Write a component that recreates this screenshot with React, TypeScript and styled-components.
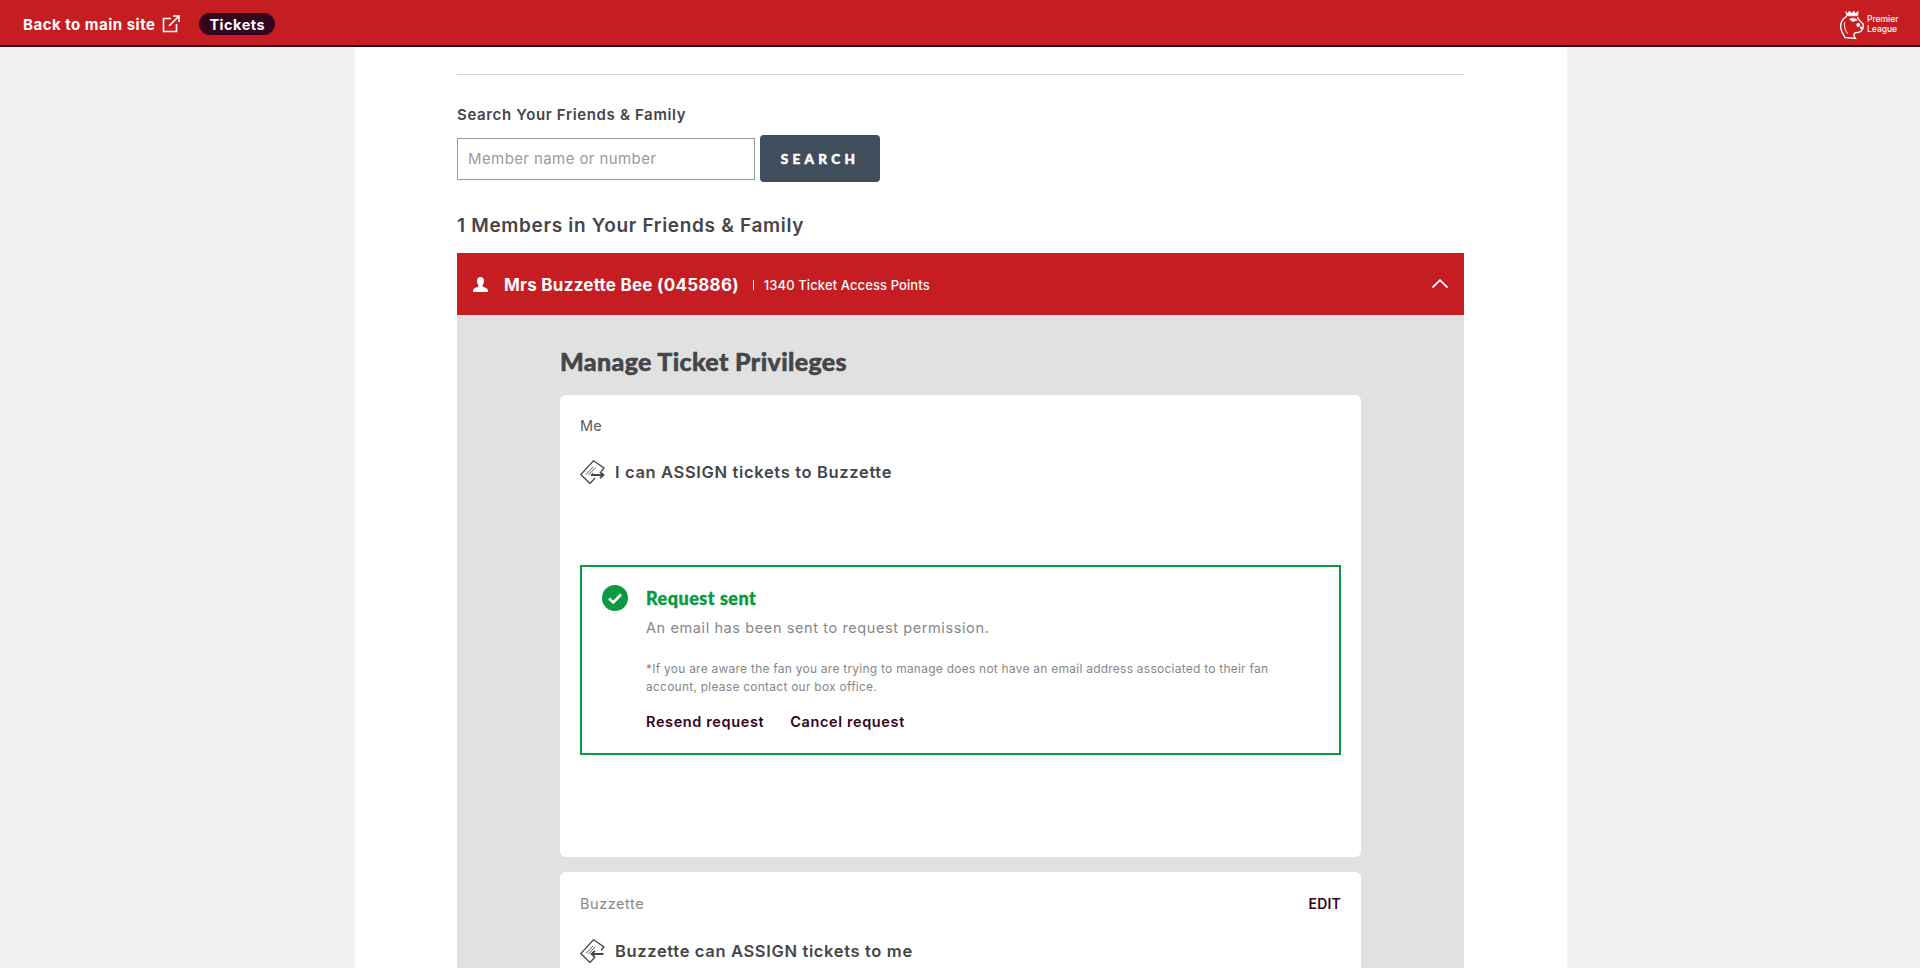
import React from 'react';
import styled, { createGlobalStyle } from 'styled-components';

const BODY = `Inter, "Liberation Sans", sans-serif`;
const HEAVY = `Lato, "Liberation Sans", sans-serif`;
const RED = '#c51d22';
const WINE = '#34031d';
const SLATE = '#45464a';

const Global = createGlobalStyle`
  html, body {
    margin: 0;
    height: 100%;
    overflow: hidden;
    background: #f1f1f1;
    font-family: ${BODY};
  }
  #root { height: 100%; }
  * { box-sizing: border-box; }
`;

const TopBar = styled.header`
  height: 47px;
  background: ${RED};
  border-bottom: 2px solid ${WINE};
  display: flex;
  align-items: center;
  padding: 3px 22px 0 23px;
`;

const BackLink = styled.a`
  display: flex;
  align-items: center;
  gap: 7px;
  color: #fff;
  font-size: 15px;
  font-weight: 700;
  letter-spacing: 0.5px;
`;

const Pill = styled.span`
  margin-left: 19px;
  height: 22px;
  padding: 0 10px;
  border-radius: 11px;
  background: ${WINE};
  color: #fff;
  font-size: 14.5px;
  font-weight: 700;
  letter-spacing: 0.5px;
  display: flex;
  align-items: center;
`;

const Brand = styled.div`
  margin-left: auto;
  display: flex;
  align-items: center;
  color: #fff;
`;

const BrandName = styled.span`
  font-size: 8.5px;
  line-height: 10px;
  font-weight: 500;
  width: 31px;
  margin-left: 2px;
`;

const Sheet = styled.main`
  width: 1212px;
  height: calc(100% - 47px);
  margin-left: 355px;
  background: #fff;
  padding: 27px 103px 0 102px;
  overflow: hidden;
`;

const Rule = styled.hr`
  margin: 0;
  border: 0;
  border-top: 1px solid #d4d4d4;
`;

const SearchLabel = styled.label`
  display: block;
  margin-top: 30px;
  color: ${SLATE};
  font-size: 15px;
  line-height: 20px;
  font-weight: 600;
  letter-spacing: 0.65px;
`;

const SearchRow = styled.div`
  display: flex;
  align-items: center;
  gap: 5px;
  margin-top: 10px;
`;

const SearchInput = styled.input`
  width: 298px;
  height: 42px;
  border: 1px solid #9a9a9a;
  padding: 0 10px;
  font-family: ${BODY};
  font-size: 15px;
  letter-spacing: 0.4px;
  &::placeholder { color: #9a9a9a; opacity: 1; }
`;

const SearchButton = styled.button`
  width: 120px;
  height: 47px;
  border: 0;
  border-radius: 4px;
  background: #3f4d5c;
  color: #fff;
  font-family: ${HEAVY};
  font-size: 13.5px;
  font-weight: 900;
  letter-spacing: 4.3px;
  -webkit-text-stroke: 0.5px #fff;
`;

const MembersTitle = styled.h2`
  margin: 31px 0 0;
  color: ${SLATE};
  font-size: 19px;
  line-height: 26px;
  font-weight: 600;
  letter-spacing: 0.68px;
`;

const MemberBar = styled.div`
  height: 62px;
  margin-top: 14px;
  background: ${RED};
  color: #fff;
  display: flex;
  align-items: center;
  padding: 0 16px;
`;

const MemberName = styled.span`
  margin: 2px 0 0 16px;
  font-size: 17px;
  font-weight: 700;
  letter-spacing: 0.25px;
`;

const Points = styled.span`
  margin: 2px 0 0 14px;
  padding-left: 11px;
  font-size: 13px;
  font-weight: 500;
  letter-spacing: 0.1px;
  background: linear-gradient(#fff, #fff) left center / 1px 10px no-repeat;
`;

const Chevron = styled.span`
  margin: 0 0 2px auto;
  display: flex;
`;

const Panel = styled.section`
  background: #e1e1e1;
  padding: 30px 103px 0;
`;

const PanelTitle = styled.h3`
  margin: 0 0 18px;
  color: ${SLATE};
  font-family: ${HEAVY};
  font-size: 25px;
  line-height: 32px;
  font-weight: 900;
  letter-spacing: 0.35px;
  -webkit-text-stroke: 0.5px ${SLATE};
`;

const Card = styled.article<{ $height: number }>`
  height: ${p => p.$height}px;
  margin-bottom: 15px;
  background: #fff;
  border-radius: 6px;
  padding: 20px 20px 0;
`;

const CardHead = styled.div`
  display: flex;
  justify-content: space-between;
  align-items: center;
  min-height: 21px;
`;

const Who = styled.span<{ $muted?: boolean }>`
  color: ${p => (p.$muted ? '#85878b' : '#5a5c60')};
  font-size: 14.5px;
  letter-spacing: ${p => (p.$muted ? '0.55px' : '0.1px')};
`;

const Edit = styled.a`
  display: block;
  color: ${WINE};
  font-size: 14px;
  line-height: 23px;
  font-weight: 600;
  letter-spacing: 0.2px;
`;

const Privilege = styled.div`
  display: flex;
  align-items: center;
  gap: 10px;
  margin-top: 23px;
  height: 26px;
  color: ${SLATE};
  font-size: 16.5px;
  font-weight: 600;
  letter-spacing: 0.65px;
`;

const Notice = styled.div`
  margin-top: 80px;
  height: 190px;
  border: 2px solid #0a9a42;
  display: flex;
  padding: 18px 20px 0;
  gap: 18px;
`;

const NoticeBody = styled.div`
  flex: 1;
`;

const NoticeTitle = styled.div`
  margin-top: 1px;
  color: #0a9a42;
  font-family: ${HEAVY};
  font-size: 18px;
  line-height: 24px;
  font-weight: 900;
  letter-spacing: 0.5px;
  -webkit-text-stroke: 0.4px #0a9a42;
`;

const NoticeText = styled.div`
  margin-top: 6px;
  color: #85878b;
  font-size: 14.5px;
  line-height: 24px;
  letter-spacing: 0.6px;
`;

const NoticeSmall = styled.p`
  margin: 20px 0 0;
  width: 640px;
  color: #85878b;
  font-size: 12px;
  line-height: 18px;
  letter-spacing: 0.24px;
`;

const Actions = styled.div`
  display: flex;
  gap: 26px;
  margin-top: 15px;
  color: ${WINE};
  font-size: 14.5px;
  line-height: 22px;
  font-weight: 600;
  letter-spacing: 0.62px;
`;

const TicketIcon = ({ back }: { back?: boolean }) => (
  <svg width="25" height="24" viewBox="0 0 25 24" fill="none" stroke="#45464a" strokeWidth="1.3" style={{ flex: 'none' }}>
    <path d="M21 11.5 L24 8 L13.5 0.8 L0.8 14.5 L10 23.5 L15 18" />
    <path d="M6 14.5 L13 7 M8.5 15 L15.5 7.5 M11 15 L13 13" strokeWidth="0.9" />
    {back ? (
      <path d="M23.5 15 H11.5 M15 11.8 L11.5 15 L15 18.2" strokeWidth="1.8" />
    ) : (
      <path d="M11 15 H23.5 M20 11.8 L23.5 15 L20 18.2" strokeWidth="1.8" />
    )}
  </svg>
);

const LionLogo = () => (
  <svg width="26" height="32" viewBox="0 0 27 32" fill="none" stroke="#fff" strokeWidth="1.5">
    <path d="M7 3 L9 5 L11 2.5 L13 5 L15.5 2.5 L17 5 L20 3 L19.5 7.5 H8 Z" fill="#fff" strokeWidth="0.6" />
    <path d="M8 8 C3 11 1 16 2 21 C3 25 5 27 6 30 L17 31 C15 28 15 26 17 25 C21 25 24 24 25 20 L25 16 L21 12 L19 9" />
    <path d="M11 11 C13 9 17 10 19 12 L14 13.5 Z" fill="#fff" strokeWidth="0.6" />
    <circle cx="20" cy="17" r="2" fill="#fff" stroke="none" />
    <circle cx="23" cy="20" r="1.3" fill="#fff" stroke="none" />
    <path d="M6 14 C5 18 6 22 9 26" strokeWidth="1" />
  </svg>
);

const App = () => (
  <>
    <Global />
    <TopBar>
      <BackLink>
        Back to main site
        <svg width="18" height="18" viewBox="0 0 18 18" fill="none" stroke="#fff" strokeWidth="1.6">
          <path d="M9 3.5 H1.5 V16.5 H14.5 V9" />
          <path d="M7 11 L16.5 1.5 M11 1 H17 V7" />
        </svg>
      </BackLink>
      <Pill>Tickets</Pill>
      <Brand>
        <LionLogo />
        <BrandName>Premier League</BrandName>
      </Brand>
    </TopBar>
    <Sheet>
      <Rule />
      <SearchLabel>Search Your Friends &amp; Family</SearchLabel>
      <SearchRow>
        <SearchInput placeholder="Member name or number" />
        <SearchButton>SEARCH</SearchButton>
      </SearchRow>
      <MembersTitle>1 Members in Your Friends &amp; Family</MembersTitle>
      <MemberBar>
        <svg width="15" height="15" viewBox="0 0 15 15" fill="#fff">
          <path d="M7.5 0 C10 0 11 2 11 4 C11 6 10 7.5 9.4 8.5 C9.4 9.6 10.5 10 12 10.6 C14 11.4 15 12 15 15 H0 C0 12 1 11.4 3 10.6 C4.5 10 5.6 9.6 5.6 8.5 C5 7.5 4 6 4 4 C4 2 5 0 7.5 0 Z" />
        </svg>
        <MemberName>Mrs Buzzette Bee (045886)</MemberName>
        <Points>1340 Ticket Access Points</Points>
        <Chevron>
          <svg width="16" height="9" viewBox="0 0 16 9" fill="none" stroke="#fff" strokeWidth="1.8">
            <path d="M0.5 8.5 L8 1.2 L15.5 8.5" />
          </svg>
        </Chevron>
      </MemberBar>
      <Panel>
        <PanelTitle>Manage Ticket Privileges</PanelTitle>
        <Card $height={462}>
          <CardHead>
            <Who>Me</Who>
          </CardHead>
          <Privilege>
            <TicketIcon />
            I can ASSIGN tickets to Buzzette
          </Privilege>
          <Notice>
            <svg width="26" height="26" viewBox="0 0 26 26" style={{ flex: 'none' }}>
              <circle cx="13" cy="13" r="13" fill="#0a9a42" />
              <path d="M7 13.5 L11.3 17.5 L19 9.5" fill="none" stroke="#fff" strokeWidth="2.6" />
            </svg>
            <NoticeBody>
              <NoticeTitle>Request sent</NoticeTitle>
              <NoticeText>An email has been sent to request permission.</NoticeText>
              <NoticeSmall>
                *If you are aware the fan you are trying to manage does not have an email address associated to their fan account, please contact our box office.
              </NoticeSmall>
              <Actions>
                <span>Resend request</span>
                <span>Cancel request</span>
              </Actions>
            </NoticeBody>
          </Notice>
        </Card>
        <Card $height={300}>
          <CardHead>
            <Who $muted>Buzzette</Who>
            <Edit>EDIT</Edit>
          </CardHead>
          <Privilege>
            <TicketIcon back />
            Buzzette can ASSIGN tickets to me
          </Privilege>
        </Card>
      </Panel>
    </Sheet>
  </>
);

export default App;
